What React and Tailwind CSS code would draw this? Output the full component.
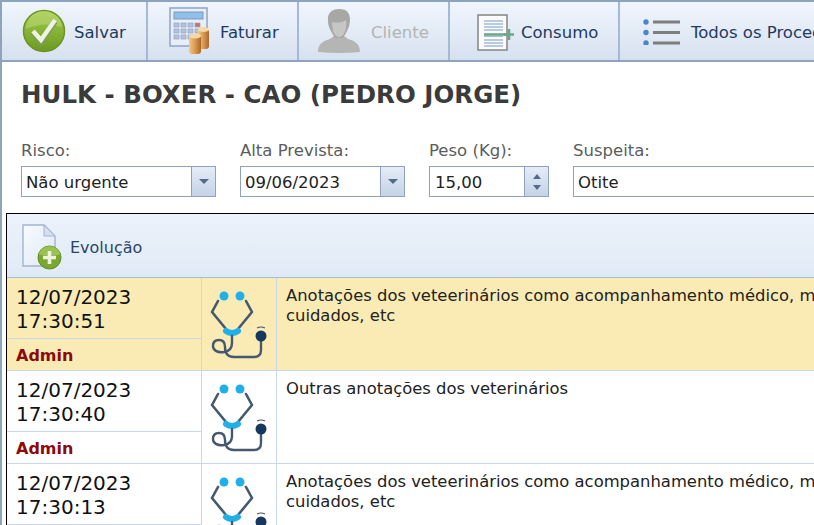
import React from "react";

const CheckIcon = () => (
  <svg width="44" height="44" viewBox="0 0 44 44">
    <defs>
      <linearGradient id="chk" x1="0" y1="0" x2="0" y2="1">
        <stop offset="0" stopColor="#a4cc4a" />
        <stop offset="1" stopColor="#6b9a22" />
      </linearGradient>
    </defs>
    <circle cx="22" cy="22" r="20.5" fill="url(#chk)" stroke="#6d9326" strokeWidth="1.5" />
    <path d="M4 20a18 17 0 0 1 36-2q-18-6-36 2z" fill="#c3de82" opacity="0.45" />
    <path d="M11 23l8 10 14-21" fill="none" stroke="#7f9c58" strokeWidth="6" />
    <path d="M11 22l8 9 14-20" fill="none" stroke="#eef3e4" strokeWidth="4.5" />
  </svg>
);

const CalcIcon = () => (
  <svg width="44" height="48" viewBox="0 0 44 48">
    <defs>
      <linearGradient id="coin" x1="0" y1="0" x2="1" y2="0">
        <stop offset="0" stopColor="#f2c98a" />
        <stop offset="0.5" stopColor="#d99a4e" />
        <stop offset="1" stopColor="#a8682a" />
      </linearGradient>
    </defs>
    <rect x="1" y="1" width="37" height="38" fill="#e9eef6" stroke="#8fa3c7" strokeWidth="1.5" />
    <rect x="5" y="5" width="29" height="7" fill="#8fc0e8" stroke="#7c9ac0" />
    {[16, 22, 28].map((y) =>
      [5, 12, 19, 26].map((x) => (
        <rect key={`${x}-${y}`} x={x} y={y} width="5" height="4" fill={x === 26 && y === 16 ? "#d0705f" : "#b4c3dc"} stroke="#8fa3c7" strokeWidth="0.7" />
      ))
    )}
    <rect x="29" y="22" width="11" height="20" rx="3" fill="url(#coin)" />
    <ellipse cx="34.5" cy="22.5" rx="5.5" ry="2.5" fill="#f4d9a6" />
    <rect x="20" y="28" width="12" height="19" rx="3" fill="url(#coin)" />
    <ellipse cx="26" cy="29" rx="6" ry="2.5" fill="#f4d9a6" />
  </svg>
);

const UserIcon = () => (
  <svg width="44" height="46" viewBox="0 0 44 46">
    <path d="M1 44c0-9 6-11 12-13l4-3h10l4 3c6 2 12 4 12 13q-21 2-42 0z" fill="#b5b5b3" />
    <path d="M11 13c-1-8 4-12 11-12s11 3 11 11c0 5-2 9-4 13l-3 5h-8l-3-5c-2-4-4-7-4-12z" fill="#a7a7a5" />
    <path d="M15 14c3 1 10 1 14-2 1 6 0 11-3 15l-3 2h-2l-3-2c-2-3-3-8-3-13z" fill="#c6c6c4" />
  </svg>
);

const ConsumoIcon = () => (
  <svg width="38" height="37" viewBox="0 0 38 37" className="mt-[2px]">
    <rect x="1" y="1" width="29" height="35" fill="#fbfbfb" stroke="#8b8b8b" strokeWidth="1.6" />
    <path d="M7 7h19M7 10h19M7 13h19M7 16h19M7 26h19M7 29h19M7 32h19" stroke="#a3bcd8" strokeWidth="1.3" />
    <path d="M7 20.5h23" stroke="#6ea58c" strokeWidth="2.6" />
    <path d="M32 15v11M27 20.5h10" stroke="#6ea58c" strokeWidth="2.6" fill="none" />
    <path d="M7 22.5h19" stroke="#a3bcd8" strokeWidth="1" />
  </svg>
);

const ListIcon = () => (
  <svg width="37" height="26" viewBox="0 0 37 26" className="mt-[1px]">
    {[3, 13.5, 24].map((y) => (
      <g key={y}>
        <circle cx="3" cy={y} r="2.7" fill="#4d86c4" />
        <rect x="10" y={y - 1.5} width="27" height="3" fill="#7e7e7e" />
      </g>
    ))}
  </svg>
);

const DocAddIcon = () => (
  <svg width="40" height="46" viewBox="0 0 40 46">
    <defs>
      <linearGradient id="doc" x1="0" y1="0" x2="1" y2="1">
        <stop offset="0" stopColor="#f8fbff" />
        <stop offset="1" stopColor="#dfe8f5" />
      </linearGradient>
    </defs>
    <path d="M1 1h21l11 11v30H1z" fill="url(#doc)" stroke="#a2b3d2" strokeWidth="1.4" />
    <path d="M22 1v11h11z" fill="#d5dfee" stroke="#a2b3d2" strokeWidth="1" />
    <circle cx="27.5" cy="33.5" r="11.5" fill="#7ba92f" stroke="#5f8a28" />
    <path d="M17 31a10.5 9 0 0 1 21 0z" fill="#a9cd5f" opacity="0.7" />
    <path d="M27.5 27v13M21 33.5h13" stroke="#edf3df" strokeWidth="3.6" />
  </svg>
);

const Stetho = () => (
  <svg width="58" height="70" viewBox="0 0 58 70" fill="none">
    <circle cx="14" cy="5" r="4.5" fill="#1fb0ea" />
    <circle cx="30" cy="5" r="4.5" fill="#1fb0ea" />
    <path d="M8 10L2 21 16 38M36 10L42 21 28 38" stroke="#44586f" strokeWidth="2.6" strokeLinecap="round" strokeLinejoin="round" />
    <path d="M16 40q6 4 12 0" stroke="#1fb0ea" strokeWidth="6" strokeLinecap="round" />
    <path d="M22 45v7q0 8-8 9c-7 1-11-2-11-6q0-6 6-6 6 0 6 7 0 10 9 10h20q7 0 7-7V51" stroke="#44586f" strokeWidth="2.4" strokeLinecap="round" />
    <circle cx="51" cy="45" r="5.5" fill="#17375e" />
    <path d="M47 37q4-2 8 0" stroke="#44586f" strokeWidth="1.2" />
  </svg>
);

const ToolBtn = ({ width, gap, pad, icon, label, disabled }) => (
  <div className={`${width} ${gap} ${pad} flex shrink-0 items-center border-r-2 border-[#a3b9d6] last:border-r-0`}>
    {icon}
    <span className={`mt-[5px] ${disabled ? "text-[#b4b4b4]" : "text-[#1f3a60]"}`}>{label}</span>
  </div>
);

const Field = ({ label, width, children }) => (
  <div className={`${width} shrink-0`}>
    <div className="mb-[6px] h-[18px] text-[16.5px] leading-[18px] text-[#5c5c5c]">{label}</div>
    <div className="flex h-[31px] border border-[#8fa3c0] bg-white text-[16.5px] text-[#222]">{children}</div>
  </div>
);

const ArrowBtn = () => (
  <div className="flex w-[24px] items-center justify-center border-l border-[#8fa3c0] bg-gradient-to-b from-[#e4ecf7] to-[#c5d3e6]">
    <div className="h-0 w-0 border-x-[5px] border-t-[5px] border-x-transparent border-t-[#55698a]" />
  </div>
);

const Row = ({ date, time, text, highlight }) => (
  <div className={`flex shrink-0 border-b border-[#c8d8ea] ${highlight ? "bg-[#faebb4]" : "bg-white"}`}>
    <div className="w-[195px] shrink-0 border-r border-[#c8d8ea]">
      <div className="h-[61px] border-b border-[#c8d8ea] pt-[7px] pl-[9px] text-[20px] leading-[24px] text-[#111]">
        <div>{date}</div>
        <div>{time}</div>
      </div>
      <div className="h-[31px] pt-[7px] pl-[9px] text-[16px] leading-[20px] font-bold text-[#8b0a0a]">Admin</div>
    </div>
    <div className="w-[75px] shrink-0 border-r border-[#c8d8ea] pt-[13px] pl-[8px]">
      <Stetho />
    </div>
    <div className="w-[700px] shrink-0 pt-[8px] pl-[9px] text-[16.4px] leading-[20px] text-[#222]">{text}</div>
  </div>
);

const longText = (
  <>
    Anotações dos veteerinários como acompanhamento médico, medicações,
    <br />
    cuidados, etc
  </>
);

export default function App() {
  return (
    <div className="h-[525px] w-[814px] overflow-hidden border-l-2 border-[#8fa3bf] bg-white font-['DejaVu_Sans',sans-serif]">
      <div className="flex h-[62px] border-y-2 border-[#8ea3bf] bg-gradient-to-b from-[#f1f6fd] to-[#d6e1ef] text-[16.5px] whitespace-nowrap">
        <ToolBtn width="w-[146px]" gap="gap-[8px]" pad="pl-[20px]" icon={<CheckIcon />} label="Salvar" />
        <ToolBtn width="w-[151px]" gap="gap-[7px]" pad="pl-[21px]" icon={<CalcIcon />} label="Faturar" />
        <ToolBtn width="w-[151px]" gap="gap-[10px]" pad="pl-[18px]" icon={<UserIcon />} label="Cliente" disabled />
        <ToolBtn width="w-[170px]" gap="gap-[6px]" pad="pl-[27px]" icon={<ConsumoIcon />} label="Consumo" />
        <ToolBtn width="w-[300px]" gap="gap-[11px]" pad="pl-[23px]" icon={<ListIcon />} label="Todos os Procedimentos" />
      </div>

      <h1 className="pt-[18px] pl-[19px] text-[24.5px] leading-[30px] font-bold whitespace-nowrap text-[#3b3b3b]">
        HULK - BOXER - CAO (PEDRO JORGE)
      </h1>

      <div className="mt-[32px] flex gap-[24px] pl-[19px]">
        <Field label="Risco:" width="w-[195px]">
          <div className="flex-1 pl-[4px] leading-[31px]">Não urgente</div>
          <ArrowBtn />
        </Field>
        <Field label="Alta Prevista:" width="w-[165px]">
          <div className="flex-1 pl-[4px] leading-[31px]">09/06/2023</div>
          <ArrowBtn />
        </Field>
        <Field label="Peso (Kg):" width="w-[120px]">
          <div className="flex-1 pl-[5px] leading-[31px]">15,00</div>
          <div className="flex w-[24px] flex-col items-center justify-center gap-[6px] border-l border-[#8fa3c0] bg-gradient-to-b from-[#e4ecf7] to-[#c5d3e6]">
            <div className="h-0 w-0 border-x-[4px] border-b-[5px] border-x-transparent border-b-[#55698a]" />
            <div className="h-0 w-0 border-x-[4px] border-t-[5px] border-x-transparent border-t-[#55698a]" />
          </div>
        </Field>
        <Field label="Suspeita:" width="w-[300px]">
          <div className="flex-1 pl-[4px] leading-[31px]">Otite</div>
        </Field>
      </div>

      <div className="mt-[16px] ml-[4px] h-[400px] w-[900px] border-t border-l border-black">
        <div className="flex h-[64px] items-center gap-[8px] border-b border-[#a9bcd6] bg-gradient-to-b from-[#ecf2fb] to-[#e0eaf6] pt-[2px] pl-[15px] text-[16px] text-[#2b4468]">
          <DocAddIcon />
          <span className="mt-[2px]">Evolução</span>
        </div>
        <Row date="12/07/2023" time="17:30:51" text={longText} highlight />
        <Row date="12/07/2023" time="17:30:40" text="Outras anotações dos veterinários" />
        <Row date="12/07/2023" time="17:30:13" text={longText} />
      </div>
    </div>
  );
}
